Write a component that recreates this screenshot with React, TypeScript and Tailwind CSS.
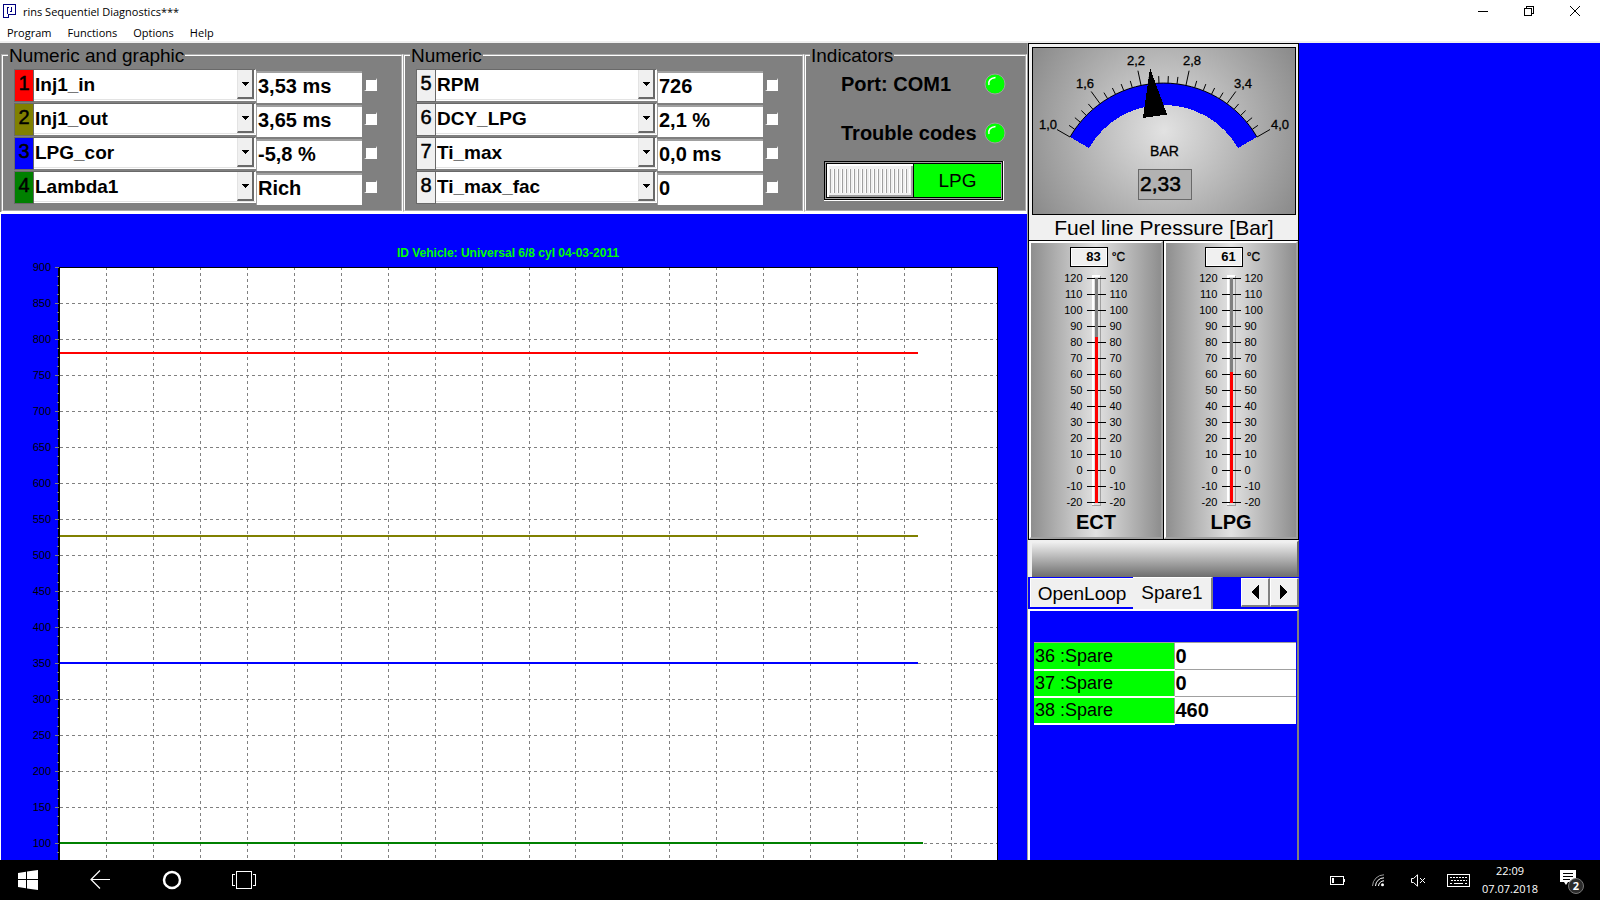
import { useState } from "react";

const graphicChannels = [
  { id: 1, name: "Inj1_in", value: "3,53 ms", color: "bg-[#ff0000]" },
  { id: 2, name: "Inj1_out", value: "3,65 ms", color: "bg-[#808000]" },
  { id: 3, name: "LPG_cor", value: "-5,8 %", color: "bg-[#0000ff]" },
  { id: 4, name: "Lambda1", value: "Rich", color: "bg-[#008000]" },
];

const numericChannels = [
  { id: 5, name: "RPM", value: "726", color: "bg-[#f0f0f0]" },
  { id: 6, name: "DCY_LPG", value: "2,1 %", color: "bg-[#f0f0f0]" },
  { id: 7, name: "Ti_max", value: "0,0 ms", color: "bg-[#f0f0f0]" },
  { id: 8, name: "Ti_max_fac", value: "0", color: "bg-[#f0f0f0]" },
];

const spares = [
  { label: "36 :Spare", value: "0" },
  { label: "37 :Spare", value: "0" },
  { label: "38 :Spare", value: "460" },
];

// y is measured from the top of the plot, 36px per 50 units
const traces = [
  { color: "#ff0000", y: 86, end: "91.5%" },
  { color: "#808000", y: 269, end: "91.5%" },
  { color: "#0000ff", y: 396, end: "91.5%" },
  { color: "#008000", y: 576, end: "92%" },
];

const yLabels = Array.from({ length: 17 }, (_, i) => 900 - i * 50);
const degrees = Array.from({ length: 15 }, (_, i) => 120 - i * 10);

type Channel = (typeof graphicChannels)[number];

function TitleBar() {
  return (
    <header className="flex h-[22px] shrink-0 items-center bg-white pl-[3px] pr-[2px]">
      <svg width="14" height="14" viewBox="0 0 14 14" shapeRendering="crispEdges">
        <path d="M0 0H13V11H6V14H0V13H5V10H12V1H1V14H0Z" fill="#000080" />
        <path d="M4 3H5V10H4Z M5 3H6V4H5Z M8 3H9V7H8Z M7 7H9V8H7Z" fill="#000080" />
      </svg>
      <h1 className="ml-[6px] flex-1 pt-px text-[11px] leading-5">rins Sequentiel Diagnostics***</h1>
      <button aria-label="Minimize" className="flex w-[46px] justify-center">
        <svg width="10" height="10" shapeRendering="crispEdges">
          <path d="M0 5.5H10" stroke="#000" />
        </svg>
      </button>
      <button aria-label="Restore" className="flex w-[46px] justify-center">
        <svg width="10" height="10" fill="none" stroke="#000" shapeRendering="crispEdges">
          <path d="M0.5 2.5H7.5V9.5H0.5Z M2.5 2.5V0.5H9.5V7.5H7.5" />
        </svg>
      </button>
      <button aria-label="Close" className="flex w-[46px] justify-center">
        <svg width="10" height="10" stroke="#000">
          <path d="M0 0L10 10M10 0L0 10" />
        </svg>
      </button>
    </header>
  );
}

function ChannelRow({ channel }: { channel: Channel }) {
  return (
    <div className="flex h-[34px]">
      <label
        htmlFor={`channel-${channel.id}`}
        className={`h-[33px] w-[20px] border border-[#696969] text-center text-[20px] leading-[26px] [-webkit-text-stroke:0.5px] ${channel.color}`}
      >
        {channel.id}
      </label>
      <div className="relative h-[32px] flex-1 border-b border-r border-t border-b-white border-r-white border-t-[#696969]">
        <select
          id={`channel-${channel.id}`}
          className="h-[30px] w-full appearance-none border-b border-[#e3e3e3] bg-white pl-px text-[19px] font-bold leading-[26px]"
        >
          <option>{channel.name}</option>
        </select>
        <span className="pointer-events-none absolute bottom-px right-px top-0 flex w-[17px] items-center justify-center border-b-2 border-r-2 border-[#696969] border-l border-l-[#e3e3e3] bg-[#f0f0f0]">
          <svg width="7" height="4" shapeRendering="crispEdges">
            <path d="M0 0H7L3.5 4Z" />
          </svg>
        </span>
      </div>
      <input
        readOnly
        aria-label={`${channel.name} value`}
        value={channel.value}
        className="mt-[2px] h-[32px] w-[106px] border-l border-t-2 border-[#a0a0a0] bg-white pb-[4px] pl-px text-[20px] font-bold leading-[26px]"
      />
      <input
        type="checkbox"
        aria-label={`Select ${channel.name}`}
        className="ml-[2px] mt-[9px] size-[13px] appearance-none border-b border-l-2 border-r border-t-2 border-b-white border-l-[#808080] border-r-white border-t-[#808080] bg-white checked:bg-black"
      />
    </div>
  );
}

function ChannelGroup({ title, channels }: { title: string; channels: Channel[] }) {
  return (
    <fieldset className="min-w-0 border-2 border-white pl-[11px] pr-[24px] pt-[2px] [border-style:groove]">
      <legend className="ml-[-6px] h-[24px] px-px text-[19px] leading-[26px]">{title}</legend>
      {channels.map((channel) => (
        <ChannelRow key={channel.id} channel={channel} />
      ))}
    </fieldset>
  );
}

function Led() {
  return (
    <svg width="22" height="22" viewBox="0 0 22 22">
      <circle cx="11" cy="11" r="10" fill="#00ff00" stroke="#a0a0a0" />
      <path d="M5 12C4 8 6 5 11.500 4.500" fill="none" stroke="#fff" strokeWidth="1.500" />
    </svg>
  );
}

function Indicators() {
  const [lpg, setLpg] = useState(true);
  return (
    <fieldset className="min-w-0 border-2 border-white [border-style:groove]">
      <legend className="ml-[4px] h-[24px] px-px text-[19px] leading-[26px]">Indicators</legend>
      <div className="ml-[35px] mr-[19px] mt-[5px] flex h-[24px] items-center justify-between text-[20px] font-bold">
        Port: COM1
        <Led />
      </div>
      <div className="ml-[35px] mr-[19px] mt-[25px] flex h-[24px] items-center justify-between text-[20px] font-bold">
        Trouble codes
        <Led />
      </div>
      <button
        aria-pressed={lpg}
        onClick={() => setLpg(!lpg)}
        className="ml-[18px] mt-[16px] flex h-[40px] w-[180px] border-b border-r border-white bg-black p-px"
      >
        <span className="flex h-full w-full border border-[#a0a0a0]">
          <span className="flex h-full w-[88px] items-center justify-center border border-black bg-[#f0f0f0] shadow-[inset_2px_2px_0_#fff,inset_-2px_-2px_0_#a0a0a0]">
            <span className="h-[24px] w-[80px] bg-[repeating-linear-gradient(90deg,#a0a0a0_0_1px,#f0f0f0_1px_3px,#ffffff_3px_4px)]" />
          </span>
          <span className="flex h-full flex-1 items-center justify-center border-y border-black bg-[#00ff00] pt-[2px] text-[19px]">
            LPG
          </span>
        </span>
      </button>
    </fieldset>
  );
}

function Chart() {
  return (
    <section className="min-h-0 flex-1 overflow-hidden border-l border-white bg-[#0000ff] pt-[31px]">
      <h2 className="mr-[12px] h-[15px] text-center text-[12px] font-bold leading-[16px] text-[#00ff00]">
        ID Vehicle: Universal 6/8 cyl 04-03-2011
      </h2>
      <div className="flex">
        <ul className="-mt-[11px] w-[50px] text-right text-[11px] leading-[36px]">
          {yLabels.map((label) => (
            <li key={label} className="h-[36px]">
              {label}
            </li>
          ))}
        </ul>
        <svg width="9" height="656" className="mt-[7px]" shapeRendering="crispEdges">
          <rect x="7" y="0" width="2" height="656" fill="#000" />
          {Array.from({ length: 73 }, (_, i) => (
            <rect key={i} x={i % 4 ? 6 : 4} y={i * 9} width={i % 4 ? 2 : 4} height="1" fill="#808080" />
          ))}
        </svg>
        <svg height="656" className="mr-[29px] mt-[7px] min-w-0 flex-1 bg-white" shapeRendering="crispEdges">
          {Array.from({ length: 19 }, (_, i) => (
            <line
              key={i}
              x1={`${(i + 1) * 5}%`}
              x2={`${(i + 1) * 5}%`}
              y1="0"
              y2="656"
              stroke="#808080"
              strokeDasharray="3 3"
            />
          ))}
          {Array.from({ length: 18 }, (_, i) => (
            <line key={i} x1="0" x2="100%" y1={i * 36 + 36.5} y2={i * 36 + 36.5} stroke="#808080" strokeDasharray="3 3" />
          ))}
          <rect x="0" y="0" width="100%" height="1" fill="#000" />
          <svg x="100%" overflow="visible">
            <rect x="-1" width="1" height="656" fill="#000" />
          </svg>
          {traces.map((trace) => (
            <line key={trace.color} x1="0" x2={trace.end} y1={trace.y} y2={trace.y} stroke={trace.color} strokeWidth="2" />
          ))}
        </svg>
      </div>
    </section>
  );
}

function PressureGauge() {
  const cx = 131.5;
  const cy = 144;
  const r = 108;
  const labels = [
    { text: "1,0", x: 16, y: 82 },
    { text: "1,6", x: 53, y: 41 },
    { text: "2,2", x: 104, y: 18 },
    { text: "2,8", x: 160, y: 18 },
    { text: "3,4", x: 211, y: 41 },
    { text: "4,0", x: 248, y: 82 },
  ];
  return (
    <div className="border-2 border-b-0 border-[#f0f0f0] bg-[#f0f0f0] py-px pl-px">
      <svg viewBox="0 0 264 168" className="block w-full">
        <defs>
          <radialGradient id="dial" gradientUnits="userSpaceOnUse" cx="132" cy="84" r="150">
            <stop offset="0" stopColor="#e2e2e2" />
            <stop offset="1" stopColor="#8c8c8c" />
          </radialGradient>
        </defs>
        <rect x="0.500" y="0.500" width="263" height="167" fill="url(#dial)" stroke="#000" />
        <path d="M38 90A108 108 0 0 1 225 90L206 101A86 86 0 0 0 57 101Z" fill="#0000ff" shapeRendering="crispEdges" />
        <path d="M38 90A108 108 0 0 1 225 90" fill="none" stroke="#000" />
        {Array.from({ length: 26 }, (_, i) => {
          const a = ((i * 4.8 - 60) * Math.PI) / 180;
          const end = r + (i % 5 ? 7 : 15);
          return (
            <line
              key={i}
              x1={cx + r * Math.sin(a)}
              y1={cy - r * Math.cos(a)}
              x2={cx + end * Math.sin(a)}
              y2={cy - end * Math.cos(a)}
              stroke="#000"
            />
          );
        })}
        <path d="M118 21L111 71L135 67.500Z" shapeRendering="crispEdges" />
        <g fontSize="13" textAnchor="middle" stroke="#000" strokeWidth="0.300">
          {labels.map((label) => (
            <text key={label.text} x={label.x} y={label.y}>
              {label.text}
            </text>
          ))}
          <text x="132.500" y="109" fontSize="14">
            BAR
          </text>
        </g>
        <rect x="106.500" y="122.500" width="53" height="30" fill="#b2b2b2" stroke="#696969" />
        <text x="108" y="144" fontSize="21" stroke="#000" strokeWidth="0.500">
          2,33
        </text>
      </svg>
      <p className="h-[24px] text-center text-[21px] leading-[26px]">Fuel line Pressure [Bar]</p>
    </div>
  );
}

function Thermometer({ name, value }: { name: string; value: number }) {
  // 16px per 10 degrees, -20 sits at y = 232
  const top = 232 - Math.round((value + 20) * 1.6);
  return (
    <div className="flex h-[298px] flex-1 flex-col items-center border-2 border-b-[#a0a0a0] border-l-white border-r-[#a0a0a0] border-t-white bg-[linear-gradient(90deg,#8e8e8e,#e2e2e2_50%,#8e8e8e)] pt-[4px]">
      <div className="ml-[3px] flex h-[20px] gap-[4px] font-bold leading-[18px]">
        <output className="w-[38px] border border-black bg-[#f0f0f0] pr-[6px] text-right text-[13px] shadow-[inset_1px_1px_0_#fff,inset_-1px_-1px_0_#fff]">
          {value}
        </output>
        <span className="text-[12px] font-normal leading-[20px] [-webkit-text-stroke:0.3px]">°C</span>
      </div>
      <div className="mt-[3px] flex text-[11px] leading-[16px]">
        <ul className="w-[26px] text-right">
          {degrees.map((d) => (
            <li key={d}>{d}</li>
          ))}
        </ul>
        <svg width="27" height="240" shapeRendering="crispEdges">
          <rect x="9" y="5" width="9" height="231" fill="#e0e0e0" />
          <path d="M9.500 236V5.500H17" fill="none" stroke="#fff" strokeWidth="2" />
          <path d="M9 235.500H17.500V6" fill="none" stroke="#a0a0a0" />
          {degrees.map((d, i) => (
            <rect key={d} x="4" y={i * 16 + 8} width="19" height="1" />
          ))}
          <rect x="12" y="8" width="3" height="225" fill="#808080" />
          <rect x="12" y={top} width="3" height={233 - top} fill="#ff0000" />
        </svg>
        <ul className="w-[26px]">
          {degrees.map((d) => (
            <li key={d}>{d}</li>
          ))}
        </ul>
      </div>
      <p className="text-[20px] font-bold leading-[24px]">{name}</p>
    </div>
  );
}

function SpareTabs() {
  const [tab, setTab] = useState("Spare1");
  return (
    <>
      <div role="tablist" className="flex h-[32px] shrink-0 items-end pl-[2px] text-[19px]">
        <button
          role="tab"
          aria-selected={tab === "OpenLoop"}
          onClick={() => setTab("OpenLoop")}
          className="mb-[2px] h-[29px] w-[103px] whitespace-nowrap border-l border-t border-white bg-[#f0f0f0] pt-[2px] leading-[26px]"
        >
          OpenLoop
        </button>
        <button
          role="tab"
          aria-selected={tab === "Spare1"}
          onClick={() => setTab("Spare1")}
          className="h-[32px] w-[80px] border-r-2 border-t border-r-[#808080] border-t-white bg-[#f0f0f0] pb-[2px] leading-[26px]"
        >
          Spare1
        </button>
        <div className="ml-auto flex self-start pt-px">
          <button
            aria-label="Previous tab"
            className="flex h-[29px] w-[29px] items-center justify-center border-b-2 border-l border-r-2 border-t border-b-[#808080] border-l-white border-r-[#808080] border-t-white bg-[#f0f0f0]"
          >
            <svg width="8" height="14" shapeRendering="crispEdges">
              <path d="M8 0V14L0 7Z" />
            </svg>
          </button>
          <button
            aria-label="Next tab"
            className="flex h-[29px] w-[29px] items-center justify-center border-b-2 border-l border-r-2 border-t border-b-[#808080] border-l-white border-r-[#808080] border-t-white bg-[#f0f0f0]"
          >
            <svg width="8" height="14" shapeRendering="crispEdges">
              <path d="M0 0V14L8 7Z" />
            </svg>
          </button>
        </div>
      </div>
      <div className="flex-1 border-l-2 border-r-2 border-t-2 border-l-white border-r-[#808080] border-t-white pl-[4px] pr-px pt-[31px]">
        <table className="w-full border-collapse">
          <tbody>
            {spares.map((spare) => (
              <tr key={spare.label} className="h-[27px] border-t border-[#a0a0a0] bg-white">
                <th
                  scope="row"
                  className="w-[140px] border-b-2 border-r border-b-white border-r-[#a0a0a0] bg-[#00ff00] p-0 pl-px text-left text-[18px] font-normal leading-[24px]"
                >
                  {spare.label}
                </th>
                <td className="p-0 pl-px text-[20px] font-bold leading-[24px]">{spare.value}</td>
              </tr>
            ))}
          </tbody>
        </table>
      </div>
    </>
  );
}

function Taskbar() {
  return (
    <footer className="flex h-[40px] shrink-0 items-center justify-between bg-black pl-4 pr-4 font-['Open_Sans','Noto_Sans',sans-serif] text-white">
      <nav className="flex items-center gap-12">
        <button aria-label="Start" className="flex w-6 justify-center">
          <svg width="20" height="20" fill="#fff">
            <path d="M0 3L8 1.800V9H0Z M9 1.600L20 0V9H9Z M0 10H8V18.200L0 17Z M9 10H20V20L9 18.400Z" />
          </svg>
        </button>
        <button aria-label="Back" className="flex w-6 justify-center">
          <svg width="20" height="20" fill="none" stroke="#fff" strokeWidth="1.200">
            <path d="M20 9.500H1M10 0.500L1 9.500L10 18.500" />
          </svg>
        </button>
        <button aria-label="Search" className="flex w-6 justify-center">
          <svg width="20" height="20" fill="none" stroke="#fff" strokeWidth="2.500">
            <circle cx="10" cy="10" r="8" />
          </svg>
        </button>
        <button aria-label="Task view" className="flex w-6 justify-center">
          <svg width="24" height="18" fill="none" stroke="#fff" shapeRendering="crispEdges">
            <path d="M4.500 0.500H19.500V17.500H4.500Z M3 3.500H0.500V14.500H3 M21 3.500H23.500V14.500H21" />
          </svg>
        </button>
      </nav>
      <div className="flex items-center">
        <div className="flex items-center gap-4">
          <button aria-label="Battery" className="flex w-6 justify-center">
            <svg width="16" height="9" fill="none" stroke="#fff" shapeRendering="crispEdges">
              <path d="M0.500 0.500H13.500V8.500H0.500Z M14.500 3V6" />
              <path d="M2 2H4V7H2Z" fill="#fff" stroke="none" />
            </svg>
          </button>
          <button aria-label="Network" className="flex w-6 justify-center">
            <svg width="13" height="13" fill="none" stroke="#fff">
              <path d="M0.500 12A11.500 11.500 0 0 1 12 0.800" stroke="#999" />
              <path d="M3.500 12A8.500 8.500 0 0 1 12 3.800M6.500 12A5.500 5.500 0 0 1 12 6.800" />
              <circle cx="10.500" cy="10.700" r="1.500" fill="#fff" stroke="none" />
            </svg>
          </button>
          <button aria-label="Volume muted" className="flex w-6 justify-center">
            <svg width="15" height="13" fill="none" stroke="#fff">
              <path d="M0.500 4.500H2.500L6.500 0.800V12.200L2.500 8.500H0.500Z M9 4L14 9M14 4L9 9" />
            </svg>
          </button>
          <button aria-label="Touch keyboard" className="flex w-6 justify-center">
            <svg width="23" height="13" fill="none" stroke="#fff" shapeRendering="crispEdges">
              <path d="M0.500 0.500H22.500V12.500H0.500Z" />
              <path d="M3 3.500H20M4 6.500H20" strokeDasharray="2 1" />
              <path d="M3 9.500H5M7 9.500H16M18 9.500H20" />
            </svg>
          </button>
        </div>
        <time className="ml-3 mr-[22px] w-14 whitespace-nowrap text-center text-[11px] leading-[18px]">
          22:09
          <br />
          07.07.2018
        </time>
        <button aria-label="2 notifications" className="flex w-6 justify-center">
          <svg width="24" height="24" className="mt-1">
            <path d="M0 0H16V12H8L6 15L4 12H0Z" fill="#fff" />
            <path d="M3 3.500H13M3 6.500H13M3 9.500H10" stroke="#000" shapeRendering="crispEdges" />
            <circle cx="16" cy="16" r="7.500" fill="#2b2b2b" stroke="#777" />
            <text x="16" y="20" textAnchor="middle" fontSize="11" fontWeight="bold" fill="#fff">
              2
            </text>
          </svg>
        </button>
      </div>
    </footer>
  );
}

export default function App() {
  return (
    <div className="flex h-screen flex-col overflow-hidden bg-[#0000ff] font-['Liberation_Sans',Arial,sans-serif] text-black">
      <div className="shrink-0 bg-white font-['Open_Sans','Noto_Sans',sans-serif]">
        <TitleBar />
        <nav className="flex h-[21px] gap-4 border-b-2 border-[#f0f0f0] pl-[7px] text-[11px] leading-[22px]">
          <button>Program</button>
          <button>Functions</button>
          <button>Options</button>
          <button>Help</button>
        </nav>
      </div>
      <main className="flex min-h-0 flex-1">
        <div className="flex min-w-0 flex-1 flex-col">
          <div className="grid h-[171px] shrink-0 grid-cols-[402fr_401fr_223fr] border-b-2 border-white bg-[#808080] pl-px">
            <ChannelGroup title="Numeric and graphic" channels={graphicChannels} />
            <ChannelGroup title="Numeric" channels={numericChannels} />
            <Indicators />
          </div>
          <Chart />
        </div>
        <aside className="mr-[301px] flex w-[272px] shrink-0 flex-col border-l border-[#a0a0a0]">
          <div className="shrink-0 border border-black bg-black">
            <PressureGauge />
            <div className="mt-px flex gap-px">
              <Thermometer name="ECT" value={83} />
              <Thermometer name="LPG" value={61} />
            </div>
          </div>
          <div className="h-[37px] shrink-0 border-l-4 border-r-2 border-t-2 border-l-[#f0f0f0] border-r-[#696969] border-t-[#f0f0f0] bg-[linear-gradient(180deg,#f0f0f0,#6e6e6e)]" />
          <SpareTabs />
        </aside>
      </main>
      <Taskbar />
    </div>
  );
}
